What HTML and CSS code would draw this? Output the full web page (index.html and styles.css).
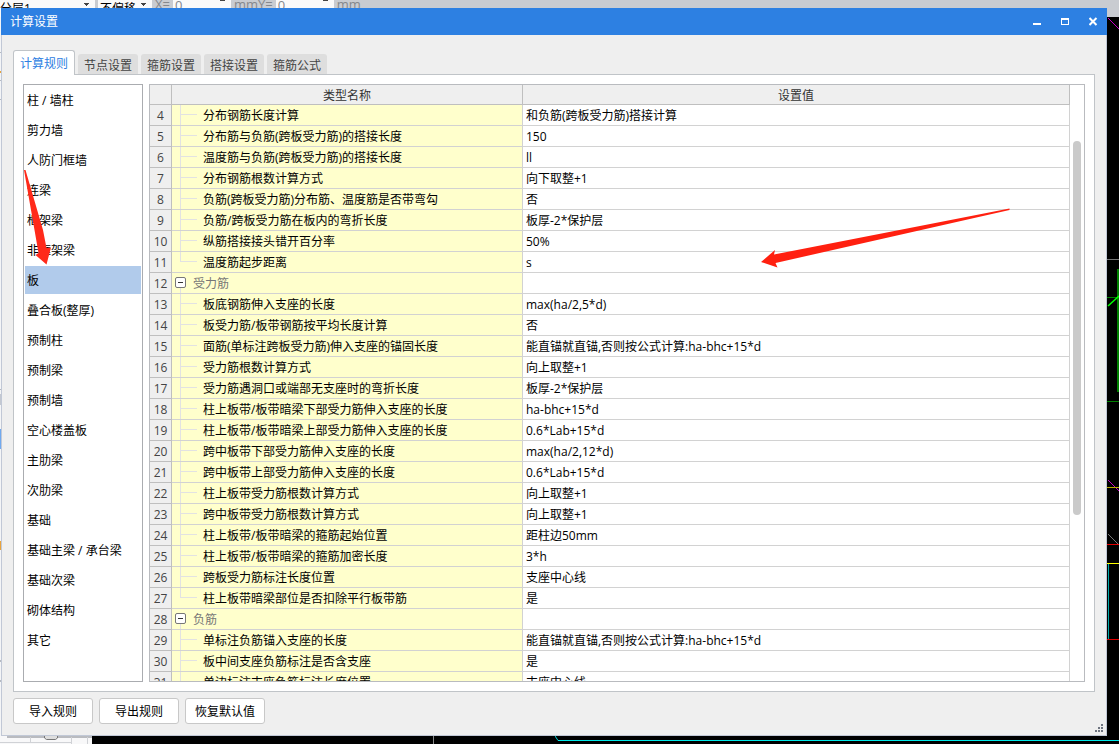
FILE: index.html
```html
<!DOCTYPE html>
<html lang="zh-CN">
<head>
<meta charset="utf-8">
<meta name="viewport" content="width=device-width, initial-scale=1">
<title>计算设置</title>
<link rel="stylesheet" href="styles.css">
</head>
<body>
<div class="workspace">
  <div class="toolbar">
    <select class="combo floor" aria-label="分层"><option>分层1</option></select>
    <select class="combo offset" aria-label="偏移"><option>不偏移</option></select>
    <label class="coord">X=<input type="text" value="0" disabled></label>
    <label class="coord">mmY=<input type="text" value="0" disabled></label>
    <span class="coord">mm</span>
  </div>
  <svg class="edge-left" viewBox="0 0 1 727" width="1" height="727" aria-hidden="true">
    <path fill="#f4f5f7" d="M0 0h1v727H0z"/>
    <path fill="#b5b9c0" d="M0 35h1v1H0zM0 63h1v1H0zM0 82h1v1H0zM0 372h1v1H0zM0 643h1v2H0zM0 663h1v2H0z"/>
    <path fill="#c3c8d1" d="M0 377h1v11H0z"/>
    <path fill="#70a9ef" d="M0 412h1v20H0z"/>
    <path fill="#e8a33c" d="M0 54h1v2H0zM0 524h1v9H0z"/>
  </svg>
  <svg class="edge-right" viewBox="0 0 12 727" width="12" height="727" fill="none" aria-hidden="true">
    <path stroke="#c400c4" d="M1 1l11 11M1 463l11 11"/>
    <path stroke="#777" d="M0 242.500h12M1 517l11 11"/>
    <path stroke="#008000" d="M0 280.500h12M0 384.500h12"/>
    <path stroke="#008000" stroke-width="2" d="M11 252v123"/>
    <path stroke="#00ff00" stroke-width="1.500" d="M1 289l11-10"/>
    <path stroke="#b8aa00" d="M0 470.500h12"/>
    <path stroke="#ffff00" d="M0 546.500h12"/>
    <path stroke="#e00000" d="M0 527.500h12M0 622.500h12"/>
    <path stroke="#00a8a8" d="M1.500 547v75"/>
  </svg>
  <svg class="corner" viewBox="0 0 92 8" width="92" height="8" aria-hidden="true">
    <path fill="#f8f8f9" d="M0 0h92v8H0z"/>
    <path fill="#b9bbc0" d="M7 0h85v2H7z"/>
    <path fill="#d0d2d6" d="M0 6h71v1H0zM30 1h1v6h-1zM71 1h1v7h-1zM87 1h1v7h-1z"/>
    <path fill="#ddd" stroke="#777" d="M44.500 0v2l2 1.500h9l2-1.500V0"/>
  </svg>
  <div class="axis"></div>
  <svg class="outline-start" viewBox="0 0 5 8" width="5" height="8" fill="none" aria-hidden="true"><path stroke="#00d8d8" d="M0 0l3 4.500h2"/></svg>
  <div class="outline"></div>
</div>

<main class="dialog">
  <header class="titlebar">
    <h1>计算设置</h1>
    <div class="window-buttons">
      <button type="button" aria-label="最小化"><svg viewBox="0 0 9 9" width="9" height="9"><path fill="#fff" d="M0 6h8v2H0z"/></svg></button>
      <button type="button" aria-label="最大化"><svg viewBox="0 0 9 9" width="9" height="9"><path fill="#fff" fill-rule="evenodd" d="M0 1h8v7H0zM1 3v4h6V3z"/></svg></button>
      <button type="button" aria-label="关闭"><svg viewBox="0 0 9 9" width="9" height="9"><path stroke="#fff" stroke-width="2" d="M.5 1l7 7M7.500 1l-7 7"/></svg></button>
    </div>
  </header>

  <div class="content">
    <div class="tabs" role="tablist">
      <button type="button" class="tab active" role="tab" aria-selected="true">计算规则</button>
      <button type="button" class="tab" role="tab">节点设置</button>
      <button type="button" class="tab" role="tab">箍筋设置</button>
      <button type="button" class="tab" role="tab">搭接设置</button>
      <button type="button" class="tab" role="tab">箍筋公式</button>
    </div>

    <section class="panel">
      <nav class="categories">
        <button type="button">柱 / 墙柱</button>
        <button type="button">剪力墙</button>
        <button type="button">人防门框墙</button>
        <button type="button">连梁</button>
        <button type="button">框架梁</button>
        <button type="button">非框架梁</button>
        <button type="button" class="selected" aria-current="true">板</button>
        <button type="button">叠合板(整厚)</button>
        <button type="button">预制柱</button>
        <button type="button">预制梁</button>
        <button type="button">预制墙</button>
        <button type="button">空心楼盖板</button>
        <button type="button">主肋梁</button>
        <button type="button">次肋梁</button>
        <button type="button">基础</button>
        <button type="button">基础主梁 / 承台梁</button>
        <button type="button">基础次梁</button>
        <button type="button">砌体结构</button>
        <button type="button">其它</button>
      </nav>

      <div class="grid">
        <div class="grid-view">
          <table>
            <colgroup><col class="col-index"><col class="col-name"><col></colgroup>
            <thead><tr><th></th><th>类型名称</th><th>设置值</th></tr></thead>
            <tbody>
              <tr><th>4</th><td>分布钢筋长度计算</td><td>和负筋(跨板受力筋)搭接计算</td></tr>
              <tr><th>5</th><td>分布筋与负筋(跨板受力筋)的搭接长度</td><td>150</td></tr>
              <tr><th>6</th><td>温度筋与负筋(跨板受力筋)的搭接长度</td><td>ll</td></tr>
              <tr><th>7</th><td>分布钢筋根数计算方式</td><td>向下取整+1</td></tr>
              <tr><th>8</th><td>负筋(跨板受力筋)分布筋、温度筋是否带弯勾</td><td>否</td></tr>
              <tr><th>9</th><td>负筋/跨板受力筋在板内的弯折长度</td><td>板厚-2*保护层</td></tr>
              <tr><th>10</th><td>纵筋搭接接头错开百分率</td><td>50%</td></tr>
              <tr class="last"><th>11</th><td>温度筋起步距离</td><td>s</td></tr>
              <tr class="group"><th>12</th><td><button type="button" class="toggle" aria-label="折叠受力筋"></button>受力筋</td><td></td></tr>
              <tr><th>13</th><td>板底钢筋伸入支座的长度</td><td>max(ha/2,5*d)</td></tr>
              <tr><th>14</th><td>板受力筋/板带钢筋按平均长度计算</td><td>否</td></tr>
              <tr><th>15</th><td>面筋(单标注跨板受力筋)伸入支座的锚固长度</td><td>能直锚就直锚,否则按公式计算:ha-bhc+15*d</td></tr>
              <tr><th>16</th><td>受力筋根数计算方式</td><td>向上取整+1</td></tr>
              <tr><th>17</th><td>受力筋遇洞口或端部无支座时的弯折长度</td><td>板厚-2*保护层</td></tr>
              <tr><th>18</th><td>柱上板带/板带暗梁下部受力筋伸入支座的长度</td><td>ha-bhc+15*d</td></tr>
              <tr><th>19</th><td>柱上板带/板带暗梁上部受力筋伸入支座的长度</td><td>0.6*Lab+15*d</td></tr>
              <tr><th>20</th><td>跨中板带下部受力筋伸入支座的长度</td><td>max(ha/2,12*d)</td></tr>
              <tr><th>21</th><td>跨中板带上部受力筋伸入支座的长度</td><td>0.6*Lab+15*d</td></tr>
              <tr><th>22</th><td>柱上板带受力筋根数计算方式</td><td>向上取整+1</td></tr>
              <tr><th>23</th><td>跨中板带受力筋根数计算方式</td><td>向上取整+1</td></tr>
              <tr><th>24</th><td>柱上板带/板带暗梁的箍筋起始位置</td><td>距柱边50mm</td></tr>
              <tr><th>25</th><td>柱上板带/板带暗梁的箍筋加密长度</td><td>3*h</td></tr>
              <tr><th>26</th><td>跨板受力筋标注长度位置</td><td>支座中心线</td></tr>
              <tr class="last"><th>27</th><td>柱上板带暗梁部位是否扣除平行板带筋</td><td>是</td></tr>
              <tr class="group"><th>28</th><td><button type="button" class="toggle" aria-label="折叠负筋"></button>负筋</td><td></td></tr>
              <tr><th>29</th><td>单标注负筋锚入支座的长度</td><td>能直锚就直锚,否则按公式计算:ha-bhc+15*d</td></tr>
              <tr><th>30</th><td>板中间支座负筋标注是否含支座</td><td>是</td></tr>
              <tr><th>31</th><td>单边标注支座负筋标注长度位置</td><td>支座中心线</td></tr>
            </tbody>
          </table>
        </div>
        <div class="scrollbar"><div class="thumb"></div></div>
      </div>
    </section>

    <footer class="actions">
      <button type="button">导入规则</button>
      <button type="button">导出规则</button>
      <button type="button">恢复默认值</button>
    </footer>
  </div>
  <svg class="grip" viewBox="0 0 8 8" width="8" height="8" aria-hidden="true"><path fill="#6e7480" d="M6 0h2v2H6zM3 3h2v2H3zM6 3h2v2H6zM0 6h2v2H0zM3 6h2v2H3zM6 6h2v2H6z"/></svg>
</main>

<svg class="arrow arrow-category" viewBox="0 0 28 96" width="28" height="96" aria-hidden="true"><path fill="#ff2a1a" d="M0 0h1.500L19 60l3.500 18 4.500-.5-4.500 17L11.500 85l3-2L10.500 60z"/></svg>
<svg class="arrow arrow-value" viewBox="0 0 250 60" width="250" height="60" aria-hidden="true"><path fill="#ff2010" d="M0 54l14-12-1 4.500L248.500.5v1.500L14.500 55l2 4.500z"/></svg>
</body>
</html>
```
FILE: styles.css
```css
* { box-sizing: border-box; }

body {
  margin: 0;
  height: 100vh;
  padding: 8px 12px 8px 1px;
  display: flex;
  overflow: hidden;
  position: relative;
  background: #000;
  color: #000;
  font: 12px/20px "Open Sans", "Noto Sans CJK SC", sans-serif;
}

button, input, select { font: inherit; color: inherit; }
button { padding: 2px 0 0; border: 0; background: none; }
svg { display: block; }

/* Drawing area behind the dialog */
.workspace { position: absolute; inset: 0; overflow: hidden; }
.toolbar {
  display: flex;
  height: 17px;
  gap: 3px;
  background: #c9ccd1;
}
.combo {
  appearance: none;
  height: 17px;
  padding: 0 0 9px;
  border: 0;
  border-radius: 0;
  line-height: 17px;
  background: linear-gradient(#444, #444) right 6px top 3px / 5px 1px no-repeat,
    linear-gradient(#444, #444) right 7px top 4px / 3px 1px no-repeat,
    linear-gradient(#444, #444) right 8px top 5px / 1px 1px no-repeat, #fafafa;
}
.floor { width: 95px; }
.offset { width: 54px; padding-left: 2px; }
.coord { display: flex; height: 17px; font-size: 13px; line-height: 9px; color: #85888d; }
.coord input {
  width: 58px;
  height: 17px;
  margin-left: 3px;
  padding: 0 0 8px 2px;
  border: 0;
  color: #85888d;
  background: linear-gradient(#444, #444) right 6px top 0 / 5px 1px no-repeat, #fafafa;
}
.edge-left { position: absolute; left: 0; top: 17px; }
.edge-right { position: absolute; right: 0; top: 17px; }
.corner { position: absolute; left: 0; bottom: 0; }
.axis { position: absolute; left: 433px; bottom: 0; width: 1px; height: 8px; background: #888; }
.outline-start { position: absolute; left: 555px; bottom: 0; }
.outline { position: absolute; left: 558px; right: 0; bottom: 3px; height: 1px; background: #00eaea; }

/* Dialog */
.dialog {
  position: relative;
  flex: 1;
  min-width: 0;
  display: flex;
  flex-direction: column;
  background: #efefef;
  border: 1px solid #c1c8d6;
  border-top: 0;
}
.titlebar {
  display: flex;
  justify-content: space-between;
  align-items: center;
  height: 27px;
  margin: 0 -1px;
  padding: 0 9px;
  background: #2d80e2;
  color: #fff;
}
.titlebar h1 { margin: 0; font-size: 12px; font-weight: 400; }
.window-buttons { display: flex; gap: 19px; }
.window-buttons button { padding: 0; }

.content {
  flex: 1;
  min-height: 0;
  display: flex;
  flex-direction: column;
  padding: 15px 11px 11px;
}
.tabs { display: flex; align-items: flex-end; gap: 3px; position: relative; z-index: 1; margin-bottom: -1px; }
.tab {
  width: 60px;
  height: 20px;
  margin-bottom: 1px;
  border-radius: 3px 3px 0 0;
  background: #dedede;
  color: #444;
}
.tab.active {
  width: 62px;
  height: 25px;
  margin-bottom: 0;
  border: 1px solid #c0c4c8;
  border-bottom: 0;
  background: #fff;
  color: #2d80e2;
}
.panel {
  flex: 1;
  min-height: 0;
  display: flex;
  gap: 6px;
  padding: 9px;
  border: 1px solid #c0c4c8;
  background: #fff;
}

.categories {
  flex: 0 0 120px;
  display: flex;
  flex-direction: column;
  gap: 2px;
  padding: 1px;
  border: 1px solid #aaacb0;
}
.categories button { height: 28px; padding-left: 2px; text-align: left; white-space: nowrap; }
.categories .selected { background: #b1cbeb; }

.grid { flex: 1; min-width: 0; display: flex; border: 1px solid #b9bbbf; }
.grid-view { flex: 1; min-width: 0; overflow: hidden; }
table { width: 100%; table-layout: fixed; border-collapse: separate; border-spacing: 0; line-height: 18px; }
.col-index { width: 22px; }
.col-name { width: 351px; }
th, td {
  height: 21px;
  padding: 2px 3px 0;
  border: solid #d2d2d2;
  border-width: 0 1px 1px 0;
  font-weight: 400;
  text-align: left;
  white-space: nowrap;
  overflow: hidden;
}
thead th { height: 20px; line-height: 17px; padding: 2px 0 0; text-align: center; background: #efefef; color: #333; border-color: #bfbfbf; }
tbody th { padding: 2px 0 0; text-align: center; background: #efefef; color: #444; border-color: #bfbfbf; }
td:nth-child(2) {
  padding-left: 31px;
  background: linear-gradient(#e2e2e2, #e2e2e2) 8px 9px / 17px 1px no-repeat,
    linear-gradient(#e2e2e2, #e2e2e2) 8px 0 / 1px 100% no-repeat, #ffffcc;
}
.last td:nth-child(2) {
  background: linear-gradient(#e2e2e2, #e2e2e2) 8px 9px / 17px 1px no-repeat,
    linear-gradient(#e2e2e2, #e2e2e2) 8px 0 / 1px 9px no-repeat, #ffffcc;
}
.group td:nth-child(2) {
  padding-left: 3px;
  color: #777;
  background: linear-gradient(#e2e2e2, #e2e2e2) 8px 15px / 1px 6px no-repeat, #ffffcc;
}
.toggle {
  width: 11px;
  height: 11px;
  margin-right: 7px;
  padding: 0;
  vertical-align: 1px;
  border: 1px solid #777;
  border-radius: 2px;
  background: linear-gradient(#333, #333) center / 5px 1px no-repeat, #fff;
}
.scrollbar { flex: 0 0 14px; padding: 56px 3px 166px; display: flex; }
.thumb { flex: 1; border-radius: 4px; background: #cacaca; }

.actions { display: flex; gap: 6px; padding-top: 6px; }
.actions button {
  width: 80px;
  height: 26px;
  border: 1px solid #c8c8c8;
  border-radius: 3px;
  background: #fff;
}
.grip { position: absolute; right: 3px; bottom: 3px; }

/* Callout arrows laid over the dialog */
.arrow { position: absolute; pointer-events: none; }
.arrow-category { left: 24px; top: 170px; }
.arrow-value { left: 761px; top: 208px; }
```
